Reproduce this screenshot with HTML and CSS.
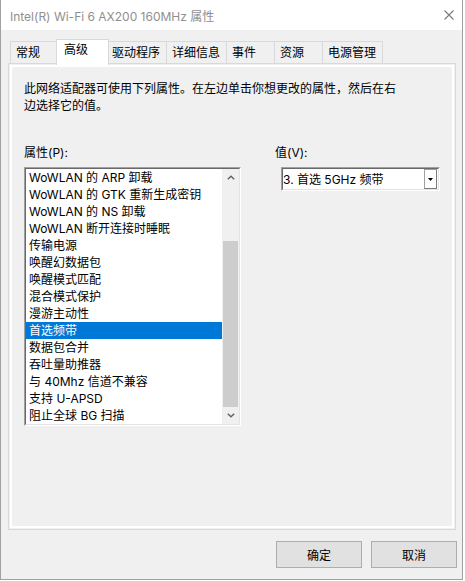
FILE: index.html
```html
<!DOCTYPE html>
<html lang="zh-CN">
<head>
<meta charset="utf-8">
<title>属性</title>
<link rel="stylesheet" href="styles.css">
</head>
<body>
<div class="window">
  <div class="titlebar">
    <span class="title">Intel(R) Wi-Fi 6 AX200 160MHz 属性</span>
    <svg class="close" width="10" height="10" viewBox="0 0 10 10"><path d="M0.5 0.5 L9.5 9.5 M9.5 0.5 L0.5 9.5" stroke="#7a7a7a" stroke-width="1.1" fill="none"/></svg>
  </div>
  <div class="body">
    <div class="tabs">
      <div class="tab">常规</div>
      <div class="tab sel">高级</div>
      <div class="tab">驱动程序</div>
      <div class="tab">详细信息</div>
      <div class="tab">事件</div>
      <div class="tab">资源</div>
      <div class="tab">电源管理</div>
    </div>
    <div class="panel">
      <p class="desc">此网络适配器可使用下列属性。在左边单击你想更改的属性，然后在右<br>边选择它的值。</p>
      <div class="props">
        <div class="col-left">
          <div class="label">属性(P):</div>
          <div class="listbox">
            <div class="listbox-inner">
              <ul class="items">
                <li>WoWLAN 的 ARP 卸载</li>
                <li>WoWLAN 的 GTK 重新生成密钥</li>
                <li>WoWLAN 的 NS 卸载</li>
                <li>WoWLAN 断开连接时睡眠</li>
                <li>传输电源</li>
                <li>唤醒幻数据包</li>
                <li>唤醒模式匹配</li>
                <li>混合模式保护</li>
                <li>漫游主动性</li>
                <li class="sel">首选频带</li>
                <li>数据包合并</li>
                <li>吞吐量助推器</li>
                <li>与 40Mhz 信道不兼容</li>
                <li>支持 U-APSD</li>
                <li>阻止全球 BG 扫描</li>
              </ul>
              <div class="vscroll">
                <div class="sb-btn"><svg width="8" height="5" viewBox="0 0 8 5"><path d="M0.8 4.2 L4 1.2 L7.2 4.2" stroke="#606060" stroke-width="1.4" fill="none"/></svg></div>
                <div class="sb-track"><div class="sb-thumb"></div></div>
                <div class="sb-btn"><svg width="8" height="5" viewBox="0 0 8 5"><path d="M0.8 0.8 L4 3.8 L7.2 0.8" stroke="#606060" stroke-width="1.4" fill="none"/></svg></div>
              </div>
            </div>
          </div>
        </div>
        <div class="col-right">
          <div class="label">值(V):</div>
          <div class="combo">
            <div class="combo-inner">
              <span class="combo-text">3. 首选 5GHz 频带</span>
              <div class="combo-btn"><svg width="5" height="3" viewBox="0 0 5 3"><polygon points="0,0 5,0 2.5,3" fill="#000"/></svg></div>
            </div>
          </div>
        </div>
      </div>
    </div>
    <div class="buttons">
      <button class="btn">确定</button>
      <button class="btn">取消</button>
    </div>
  </div>
</div>
</body>
</html>
```
FILE: styles.css
```css
html, body {
  margin: 0;
  background: #fff;
}
body {
  font-family: "Inter", "Noto Sans CJK SC", sans-serif;
  font-size: 12px;
  color: #000;
}
.window {
  width: 463px;
  height: 580px;
  box-sizing: border-box;
  border: 1px solid #a0a0a0;
  border-top: none;
  background: #f0f0f0;
  display: flex;
  flex-direction: column;
}
.titlebar {
  height: 30px;
  flex: none;
  background: #fff;
  display: flex;
  align-items: center;
  justify-content: space-between;
  padding: 0 8px 0 9px;
}
.title {
  color: #8f8f8f;
  white-space: nowrap;
}
.close {
  display: block;
}
.body {
  flex: 1;
  display: flex;
  flex-direction: column;
  padding: 9px 5px 11px 7px;
}
.tabs {
  display: flex;
  align-items: flex-end;
  height: 24px;
  margin-left: 2px;
  flex: none;
}
.tab {
  box-sizing: border-box;
  height: 22px;
  min-width: 49px;
  padding: 0 6px 0 5px;
  border: 1px solid #d9d9d9;
  border-bottom: none;
  margin-right: -1px;
  line-height: 21px;
  background: #f0f0f0;
  white-space: nowrap;
  position: relative;
}
.tab.sel {
  height: 26px;
  margin-bottom: -2px;
  min-width: 53px;
  padding-left: 7px;
  margin-left: -2px;
  margin-right: -3px;
  line-height: 20px;
  background: #fff;
  z-index: 2;
}
.panel {
  box-sizing: border-box;
  width: 448px;
  height: 467px;
  flex: none;
  border: 1px solid #d9d9d9;
  box-shadow: inset 0 0 0 1px #f0f0f0, inset 0 0 0 3px #fff;
  padding: 16px 0 0 15px;
}
.desc {
  margin: 0;
  line-height: 17px;
  white-space: nowrap;
}
.props {
  display: flex;
  margin-top: 30px;
}
.label {
  line-height: 17px;
  height: 17px;
  margin-bottom: 6px;
  white-space: nowrap;
}
.col-left {
  width: 217px;
}
.col-right {
  margin-left: 34px;
}
.listbox {
  box-sizing: border-box;
  width: 217px;
  border: 1px solid;
  border-color: #a0a0a0 #fff #fff #a0a0a0;
}
.listbox-inner {
  display: flex;
  border: 1px solid;
  border-color: #696969 #e3e3e3 #e3e3e3 #696969;
  background: #fff;
}
.items {
  list-style: none;
  margin: 0;
  padding: 0;
  width: 196px;
}
.items li {
  height: 17px;
  line-height: 17px;
  padding-left: 3px;
  white-space: nowrap;
}
.items li.sel {
  background: #0078d7;
  color: #fff;
}
.vscroll {
  width: 17px;
  background: #f0f0f0;
  display: flex;
  flex-direction: column;
}
.sb-btn {
  height: 17px;
  display: flex;
  align-items: center;
  justify-content: center;
}
.sb-btn svg {
  display: block;
}
.sb-track {
  flex: 1;
  display: flex;
  flex-direction: column;
  justify-content: flex-end;
  padding: 0 1px;
}
.sb-thumb {
  height: 166px;
  background: #cdcdcd;
}
.combo {
  box-sizing: border-box;
  width: 159px;
  height: 24px;
  margin-left: 6px;
  border: 1px solid;
  border-color: #a0a0a0 #fff #fff #a0a0a0;
}
.combo-inner {
  box-sizing: border-box;
  height: 100%;
  border: 1px solid;
  border-color: #696969 #e3e3e3 #e3e3e3 #696969;
  background: #fff;
  display: flex;
  align-items: center;
  justify-content: space-between;
}
.combo-text {
  white-space: nowrap;
  line-height: 17px;
}
.combo-btn {
  box-sizing: border-box;
  width: 13px;
  height: 20px;
  margin-right: 1px;
  border: 1px solid;
  border-color: #a0a0a0 #7a7a7a #7a7a7a #a0a0a0;
  background: #fff;
  display: flex;
  align-items: center;
  justify-content: center;
}
.combo-btn svg {
  display: block;
}
.buttons {
  display: flex;
  justify-content: flex-end;
  gap: 9px;
  margin-top: 11px;
  flex: none;
}
.btn {
  box-sizing: border-box;
  width: 86px;
  height: 27px;
  border: 1px solid #adadad;
  background: #e1e1e1;
  font: inherit;
  color: #000;
  padding: 0;
}
```
